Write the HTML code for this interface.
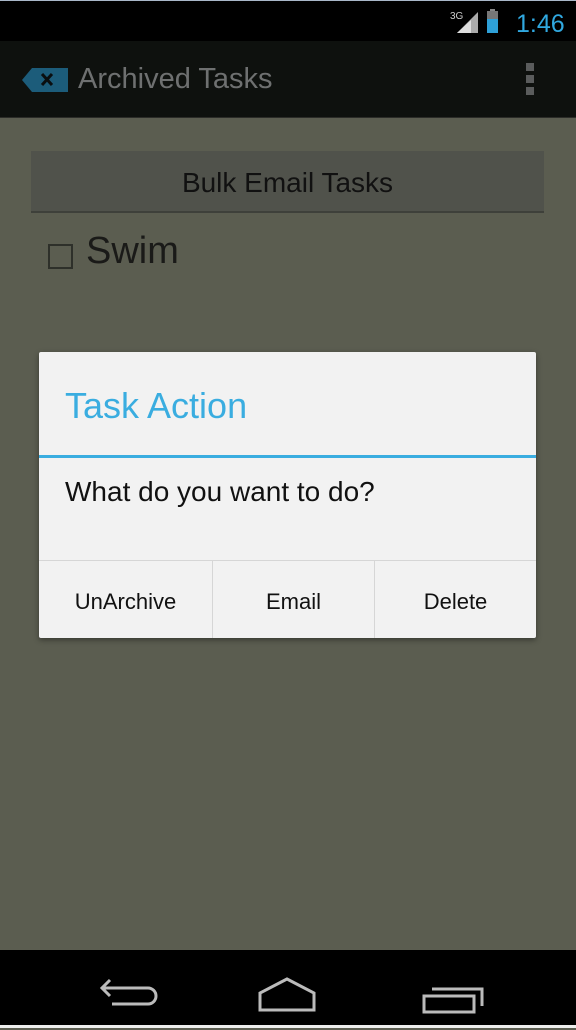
<!DOCTYPE html>
<html><head><meta charset="utf-8"><style>
*{margin:0;padding:0;box-sizing:border-box}
body{width:576px;height:1028px;background:#5b5d50;font-family:"Liberation Sans",sans-serif;position:relative;overflow:hidden}
.status{position:absolute;left:0;top:0;width:576px;height:41px;background:#000;border-top:1px solid #a9b7c9}
.action{position:absolute;left:0;top:41px;width:576px;height:77px;background:#0e110e;border-bottom:1px solid #2b2c28}
.title{position:absolute;left:78px;top:63px;font-size:29px;color:#6e7070}
.btn{position:absolute;left:31px;top:151px;width:513px;height:62px;background:#50524b;border-bottom:2px solid #3e403a;text-align:center;line-height:64px;font-size:28px;color:#111}
.cb{position:absolute;left:48px;top:244px;width:25px;height:25px;border:2px solid #2e302a}
.swim{position:absolute;left:86px;top:230px;font-size:38px;color:#1a1a18}
.dlg{position:absolute;left:39px;top:352px;width:497px;height:286px;background:#f2f2f2;border-radius:2px;box-shadow:0 2px 6px rgba(0,0,0,.4)}
.dt{position:absolute;left:26px;top:33px;font-size:36px;color:#3aade0}
.dl{position:absolute;left:0;top:103px;width:497px;height:3px;background:#3aade0}
.dm{position:absolute;left:26px;top:124px;font-size:28px;color:#111}
.bar{position:absolute;left:0;top:208px;width:497px;height:78px;border-top:1px solid #d6d6d6;display:flex}
.bar div{text-align:center;line-height:82px;font-size:22px;color:#111}
.nav{position:absolute;left:0;top:950px;width:576px;height:75px;background:#000}
</style></head><body>
<div class="status">
<svg style="position:absolute;left:450px;top:6px" width="120" height="30">
<text x="0" y="12" font-size="10" fill="#ccc" font-family="Liberation Sans">3G</text>
<polygon points="7,26 28,26 28,5" fill="#aaa"/>
<polygon points="7,26 21,26 21,13" fill="#ddd"/>
<rect x="37" y="4" width="11" height="22" fill="#2ea0d8"/><rect x="40" y="2" width="5" height="2" fill="#888"/>
<rect x="37" y="4" width="11" height="8" fill="#777"/>
<text x="66" y="25" font-size="25" fill="#30a8e0" font-family="Liberation Sans">1:46</text>
</svg></div>
<div class="action">
<svg style="position:absolute;left:22px;top:27px" width="46" height="24"><polygon points="0,12 10,0 46,0 46,24 10,24" fill="#1c5c7a"/><path d="M20,6 L30,17 M30,6 L20,17" stroke="#0a0e10" stroke-width="3"/></svg>
<div style="position:absolute;left:526px;top:22px;width:8px;height:32px;background:repeating-linear-gradient(#5a5c5c 0 8px,transparent 8px 12px)"></div>
</div>
<div class="title">Archived Tasks</div>
<div class="btn">Bulk Email Tasks</div>
<div class="cb"></div><div class="swim">Swim</div>
<div class="dlg">
<div class="dt">Task Action</div><div class="dl"></div>
<div class="dm">What do you want to do?</div>
<div class="bar"><div style="width:174px;border-right:1px solid #d6d6d6">UnArchive</div><div style="width:162px;border-right:1px solid #d6d6d6">Email</div><div style="flex:1">Delete</div></div>
</div>
<div class="nav"><svg width="576" height="75">
<g fill="none" stroke="#bbb" stroke-width="3">
<path d="M103,38 L148,38 A8,8 0 0 1 148,54 L112,54 M110,30 L102,38 L110,46"/>
<path d="M260,60 L260,43 L287,29 L314,43 L314,60 Z"/>
<path d="M424,46 L474,46 L474,62 L424,62 Z M432,39 L482,39 L482,56"/>
</g></svg></div>
<div style="position:absolute;left:0;top:1025px;width:576px;height:3px;background:#eee"></div>
</body></html>
